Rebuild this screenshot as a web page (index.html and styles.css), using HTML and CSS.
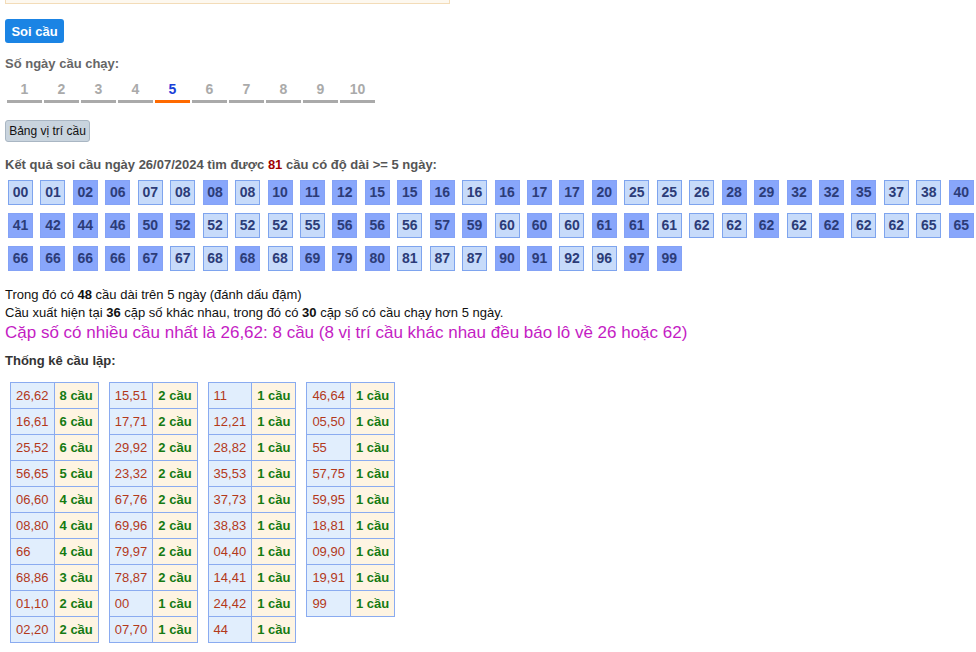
FILE: index.html
```html
<!DOCTYPE html>
<html lang="vi">
<head>
<meta charset="utf-8">
<title>Soi cầu</title>
<link rel="stylesheet" href="styles.css">
</head>
<body>
<div class="page">
  <div class="notice"></div>
  <button class="btn-primary">Soi cầu</button>
  <div class="label">Số ngày cầu chạy:</div>
  <div class="tabs">
    <span class="tab">1</span><span class="tab">2</span><span class="tab">3</span><span class="tab">4</span><span class="tab active">5</span><span class="tab">6</span><span class="tab">7</span><span class="tab">8</span><span class="tab">9</span><span class="tab">10</span>
  </div>
  <button class="btn-sec">Bảng vị trí cầu</button>
  <div class="heading">Kết quả soi cầu ngày 26/07/2024 tìm được <span class="red">81</span> cầu có độ dài &gt;= 5 ngày:</div>
  <div class="grid">
    <span class="c l">00</span><span class="c l">01</span><span class="c d">02</span><span class="c d">06</span><span class="c l">07</span><span class="c l">08</span><span class="c d">08</span><span class="c l">08</span><span class="c d">10</span><span class="c d">11</span>
    <span class="c d">12</span><span class="c d">15</span><span class="c d">15</span><span class="c d">16</span><span class="c l">16</span><span class="c d">16</span><span class="c d">17</span><span class="c d">17</span><span class="c d">20</span><span class="c l">25</span>
    <span class="c l">25</span><span class="c l">26</span><span class="c d">28</span><span class="c d">29</span><span class="c d">32</span><span class="c d">32</span><span class="c d">35</span><span class="c l">37</span><span class="c l">38</span><span class="c d">40</span>
    <span class="c d">41</span><span class="c d">42</span><span class="c d">44</span><span class="c d">46</span><span class="c d">50</span><span class="c d">52</span><span class="c l">52</span><span class="c l">52</span><span class="c l">52</span><span class="c l">55</span>
    <span class="c d">56</span><span class="c d">56</span><span class="c l">56</span><span class="c d">57</span><span class="c d">59</span><span class="c l">60</span><span class="c d">60</span><span class="c l">60</span><span class="c d">61</span><span class="c d">61</span>
    <span class="c l">61</span><span class="c l">62</span><span class="c l">62</span><span class="c d">62</span><span class="c l">62</span><span class="c d">62</span><span class="c l">62</span><span class="c l">62</span><span class="c l">65</span><span class="c d">65</span>
    <span class="c d">66</span><span class="c d">66</span><span class="c d">66</span><span class="c d">66</span><span class="c d">67</span><span class="c l">67</span><span class="c l">68</span><span class="c d">68</span><span class="c l">68</span><span class="c d">69</span>
    <span class="c d">79</span><span class="c d">80</span><span class="c l">81</span><span class="c l">87</span><span class="c l">87</span><span class="c d">90</span><span class="c d">91</span><span class="c l">92</span><span class="c l">96</span><span class="c d">97</span>
    <span class="c d">99</span>
  </div>
  <div class="summary">
    <div>Trong đó có <b>48</b> cầu dài trên 5 ngày (đánh dấu đậm)</div>
    <div>Cầu xuất hiện tại <b>36</b> cặp số khác nhau, trong đó có <b>30</b> cặp số có cầu chạy hơn 5 ngày.</div>
  </div>
  <div class="best">Cặp số có nhiều cầu nhất là 26,62: 8 cầu (8 vị trí cầu khác nhau đều báo lô về 26 hoặc 62)</div>
  <div class="subhead">Thống kê cầu lặp:</div>
  <div class="tables">
    <table class="stat">
      <tr><td class="p">26,62</td><td class="n">8 cầu</td></tr>
      <tr><td class="p">16,61</td><td class="n">6 cầu</td></tr>
      <tr><td class="p">25,52</td><td class="n">6 cầu</td></tr>
      <tr><td class="p">56,65</td><td class="n">5 cầu</td></tr>
      <tr><td class="p">06,60</td><td class="n">4 cầu</td></tr>
      <tr><td class="p">08,80</td><td class="n">4 cầu</td></tr>
      <tr><td class="p">66</td><td class="n">4 cầu</td></tr>
      <tr><td class="p">68,86</td><td class="n">3 cầu</td></tr>
      <tr><td class="p">01,10</td><td class="n">2 cầu</td></tr>
      <tr><td class="p">02,20</td><td class="n">2 cầu</td></tr>
    </table>
    <table class="stat">
      <tr><td class="p">15,51</td><td class="n">2 cầu</td></tr>
      <tr><td class="p">17,71</td><td class="n">2 cầu</td></tr>
      <tr><td class="p">29,92</td><td class="n">2 cầu</td></tr>
      <tr><td class="p">23,32</td><td class="n">2 cầu</td></tr>
      <tr><td class="p">67,76</td><td class="n">2 cầu</td></tr>
      <tr><td class="p">69,96</td><td class="n">2 cầu</td></tr>
      <tr><td class="p">79,97</td><td class="n">2 cầu</td></tr>
      <tr><td class="p">78,87</td><td class="n">2 cầu</td></tr>
      <tr><td class="p">00</td><td class="n">1 cầu</td></tr>
      <tr><td class="p">07,70</td><td class="n">1 cầu</td></tr>
    </table>
    <table class="stat">
      <tr><td class="p">11</td><td class="n">1 cầu</td></tr>
      <tr><td class="p">12,21</td><td class="n">1 cầu</td></tr>
      <tr><td class="p">28,82</td><td class="n">1 cầu</td></tr>
      <tr><td class="p">35,53</td><td class="n">1 cầu</td></tr>
      <tr><td class="p">37,73</td><td class="n">1 cầu</td></tr>
      <tr><td class="p">38,83</td><td class="n">1 cầu</td></tr>
      <tr><td class="p">04,40</td><td class="n">1 cầu</td></tr>
      <tr><td class="p">14,41</td><td class="n">1 cầu</td></tr>
      <tr><td class="p">24,42</td><td class="n">1 cầu</td></tr>
      <tr><td class="p">44</td><td class="n">1 cầu</td></tr>
    </table>
    <table class="stat">
      <tr><td class="p">46,64</td><td class="n">1 cầu</td></tr>
      <tr><td class="p">05,50</td><td class="n">1 cầu</td></tr>
      <tr><td class="p">55</td><td class="n">1 cầu</td></tr>
      <tr><td class="p">57,75</td><td class="n">1 cầu</td></tr>
      <tr><td class="p">59,95</td><td class="n">1 cầu</td></tr>
      <tr><td class="p">18,81</td><td class="n">1 cầu</td></tr>
      <tr><td class="p">09,90</td><td class="n">1 cầu</td></tr>
      <tr><td class="p">19,91</td><td class="n">1 cầu</td></tr>
      <tr><td class="p">99</td><td class="n">1 cầu</td></tr>
    </table>
  </div>
</div>
</body>
</html>
```
FILE: styles.css
```css
html, body {
  margin: 0;
  padding: 0;
  background: #fff;
  overflow: hidden;
}
body {
  font-family: "Liberation Sans", Arial, sans-serif;
  font-size: 13px;
  color: #222;
}
.page {
  padding-left: 5px;
}
.notice {
  box-sizing: border-box;
  width: 445px;
  height: 24px;
  margin-top: -20px;
  border: 1px solid #f3dcb8;
  background: #fdf8ef;
}
.btn-primary {
  display: block;
  margin-top: 15px;
  box-sizing: border-box;
  width: 59px;
  height: 24px;
  padding: 0;
  border: none;
  border-radius: 3px;
  background: #1b84e4;
  color: #fff;
  font-family: "Liberation Sans", Arial, sans-serif;
  font-size: 13px;
  font-weight: bold;
}
.label {
  margin-top: 13px;
  line-height: 16px;
  font-weight: bold;
  color: #666;
}
.tabs {
  display: flex;
  gap: 2px;
  margin-top: 7px;
  padding-left: 2px;
}
.tab {
  width: 35px;
  line-height: 20px;
  padding-bottom: 1px;
  text-align: center;
  font-size: 14px;
  font-weight: bold;
  color: #aaa;
  border-bottom: 3px solid #aaa;
}
.tab.active {
  color: #1a3fd8;
  border-bottom-color: #ff6a00;
}
.btn-sec {
  display: block;
  margin-top: 17px;
  box-sizing: border-box;
  width: 85px;
  height: 22px;
  padding: 0;
  border: 1px solid #a9b6c3;
  border-radius: 3px;
  background: #c9d4de;
  color: #111;
  font-family: "Liberation Sans", Arial, sans-serif;
  font-size: 12px;
}
.heading {
  margin-top: 15px;
  line-height: 16px;
  font-weight: bold;
  color: #555;
}
.red {
  color: #a00000;
}
.grid {
  display: grid;
  grid-template-columns: repeat(30, 25px);
  column-gap: 7.45px;
  row-gap: 8px;
  margin-top: 7px;
  margin-left: 3px;
  width: 980px;
}
.c {
  box-sizing: border-box;
  height: 25px;
  line-height: 23px;
  text-align: center;
  font-size: 14px;
  font-weight: bold;
  color: #2c3c78;
  border: 1px solid #7ea4ee;
}
.c.l {
  background: #c7dbfa;
}
.c.d {
  background: #88a6fb;
  border-color: #84a2f6;
}
.summary {
  margin-top: 15px;
  font-size: 13px;
  line-height: 18px;
  color: #111;
}
.best {
  font-size: 17px;
  line-height: 22px;
  color: #c41cc4;
}
.subhead {
  margin-top: 9px;
  line-height: 16px;
  font-weight: bold;
  color: #333;
}
.tables {
  display: flex;
  align-items: flex-start;
  gap: 10px;
  margin-top: 13px;
  margin-left: 5px;
}
.stat {
  border-collapse: collapse;
}
.stat td {
  border: 1px solid #8aabf0;
  padding: 4px 5px;
  line-height: 17px;
  font-size: 13px;
  white-space: nowrap;
}
.stat td.p {
  width: 32px;
  background: #e1eefd;
  color: #b3391b;
}
.stat td.n {
  width: 33px;
  background: #fef4e2;
  color: #157a12;
  font-weight: bold;
}
```
